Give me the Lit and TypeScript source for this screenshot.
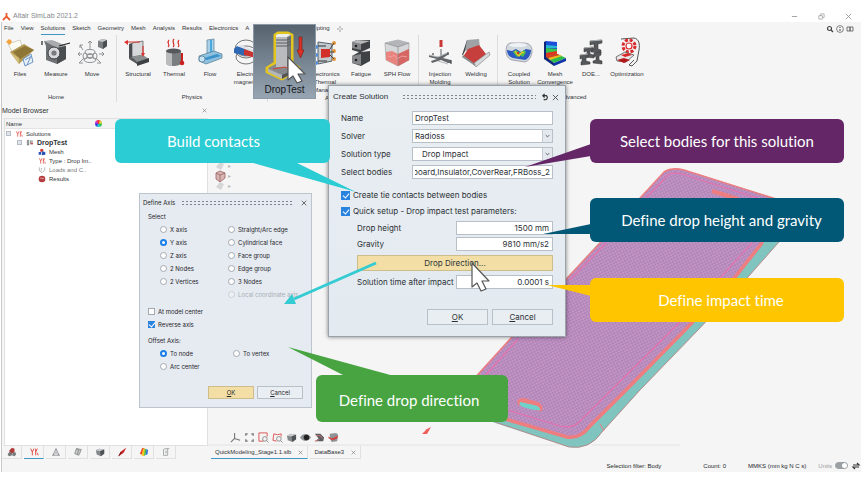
import { LitElement, html, svg, css, TemplateResult } from "lit";
import { customElement, query } from "lit/decorators.js";
import { classMap } from "lit/directives/class-map.js";

type Art = TemplateResult;

/* ---------- ribbon artwork, 30 x 30 ---------- */
const art: Record<string, Art> = {
  files: svg`<path d="M3 7l12-4 3 9-9 6z" fill="#fdfdf6" stroke="#b9b49a" stroke-width=".6"/><path d="M1 5l3-3 3 2-2 4z" fill="#f2a33c"/><path d="M5 15L19 7l10 6-15 14z" fill="#b39a55"/><path d="M8 15L20 9l9 4-14 9z" fill="#8d7636"/><path d="M5 15l9 6v6z" fill="#d3bc78"/><path d="M18 22l8-5 2 8-8 4z" fill="#e8f0f8" stroke="#4d7fb5" stroke-width=".8"/><path d="M20 23l5-3M22 28l4-9" stroke="#4d7fb5" stroke-width=".8"/>`,
  measure: svg`<path d="M3 4h10l12 5v13l-9 5-11-4V9z" fill="#6f7275"/><path d="M3 4l8-1 14 6-9 2z" fill="#a9acae"/><path d="M16 11l9-2v13l-9 5z" fill="#4b4e51"/><circle cx="13" cy="16" r="6" fill="#d7d9da" stroke="#3c3f42"/><circle cx="13" cy="16" r="2.600" fill="#77797b"/><path d="M18 9l11-3M1 4v4" stroke="#222" stroke-width="1.200"/>`,
  move: svg`<g fill="none" stroke="#85888b" stroke-width=".9"><path d="M13 12V4l-2 2m2-2l2 2M6 13L3 8m0 3V8h3M5 17H1l2-2m-2 2l2 2M22 17h5l-2-2m2 2l-2 2M7 21l-5 5h4M19 21l5 5h-4"/><ellipse cx="13" cy="15" rx="5" ry="2.500"/><ellipse cx="13" cy="23" rx="6" ry="2.500"/><circle cx="13" cy="19" r="2.500"/><ellipse cx="8" cy="19" rx="2" ry="3"/><ellipse cx="18" cy="19" rx="2" ry="3"/></g><path d="M21 4l4-2 5 1v6l-4 3-5-2z" fill="#7b7e80"/><path d="M21 4l5 1 4-2-5-1z" fill="#c3c5c6"/><path d="M26 5l4-2v6l-4 3z" fill="#4b4e50"/>`,
  structural: svg`<path d="M9 6l11-2v14l-11 2z" fill="#d6d8d9" stroke="#555" stroke-width=".7"/><path d="M6 7l3-1v14l-3 2z" fill="#4a4d50"/><path d="M9 20l11-2 6 4-12 5z" fill="#8b8e91"/><path d="M6 22l8 5v-2l-5-5z" fill="#565a5d"/><path d="M14 25l12-4v4l-12 4z" fill="#3d4043"/><path d="M5 5h12M20 9v8" stroke="#d33" stroke-width="1.200"/><path d="M1 5l4-2v5zM20 20l-2-4h4z" fill="#d33"/>`,
  thermal: svg`<path d="M7 14v12c0 4 15 4 15 0V14z" fill="#7b7e81"/><path d="M7 14v12c0 2 4 3 6 3V14z" fill="#b9bbbd"/><ellipse cx="14.500" cy="14" rx="7.500" ry="2.500" fill="#55585b"/><path d="M9 10c3-2-2-4 1-7M14 10c3-2-2-5 1-8M19 10c3-2-2-4 1-7" fill="none" stroke="#d8342c" stroke-width="1.200"/><path d="M22 16h2v8h-2z" fill="#c92020"/><circle cx="23" cy="26" r="2.300" fill="#c92020"/>`,
  flow: svg`<path d="M12 3l7-1v15l-7 2z" fill="#a9d2ea" stroke="#5c7f95" stroke-width=".7"/><path d="M15 3h2v16h-2z" fill="#4aa7dd"/><path d="M4 19l15-5 8 3v4l-16 6-7-3z" fill="#8fc2df" stroke="#4f7790" stroke-width=".7"/><path d="M6 22l16-5 4 2-14 4z" fill="#3c93cc"/><ellipse cx="7" cy="22" rx="3" ry="3" fill="#c7e4f3" stroke="#4f7790" stroke-width=".7"/>`,
  electro: svg`<g fill="none" stroke="#555" stroke-width=".8"><ellipse cx="15" cy="12" rx="11" ry="9"/><ellipse cx="15" cy="14" rx="9" ry="5"/><ellipse cx="15" cy="20" rx="10" ry="7"/></g><path d="M3 12l3-3 9 3v7L3 16z" fill="#2d68b5"/><path d="M13 12l11 3 1 6-12-3z" fill="#c93431"/><path d="M6 9l4-1 16 6-2 2z" fill="#dfe3e8"/>`,
  ethermal: svg`<path d="M8 5l14 2v17L8 27z" fill="#c2c9cf" stroke="#59636b"/><path d="M11 12l9 0v8l-9 1z" fill="#d22f28"/><path d="M8 9h8M8 24h9" stroke="#333"/><g fill="#e5973a"><circle cx="24" cy="6" r="2"/><circle cx="24" cy="14" r="2"/><circle cx="24" cy="22" r="2"/></g><g fill="#4b8ddb"><circle cx="6" cy="10" r="2"/><circle cx="6" cy="18" r="2"/><circle cx="6" cy="26" r="2"/></g><path d="M20 12l4-6M20 15h4M20 18l4 4" stroke="#444"/>`,
  fatigue: svg`<path d="M6 5l5-2h13v8l-9 4 9-1v10l-9 5-9-3v-7l7-4-7-2z" fill="#3f4244"/><path d="M6 5l9 2v6l-9-2zM6 19l9-2v11l-9-2z" fill="#85888a"/><path d="M6 5l5-2 13 1-9 3z" fill="#b7b9ba"/><circle cx="10" cy="9" r="1.300" fill="#222"/><circle cx="10" cy="23" r="1.300" fill="#222"/>`,
  sph: svg`<path d="M3 6l13-3 11 3v17l-11 6L4 23z" fill="#d5d7d8" stroke="#999" stroke-width=".6"/><path d="M3 6l13 4 11-4-11-3z" fill="#b3b6b8"/><path d="M4 15l6-1 6 3 11-5v11l-11 6L4 23z" fill="#e8837f"/><path d="M16 17l11-5v11l-11 6z" fill="#d66663"/><path d="M6 19l3 1 3-2 3 4 5-3 5 1" fill="none" stroke="#f0a09c"/><path d="M3 6l13 4v19M16 10l11-4" fill="none" stroke="#8d8f91" stroke-width=".7"/>`,
  injection: svg`<path d="M15 12h2v9h-2z" fill="#a8abad"/><path d="M14.500 3h3v7h-3z" fill="#c93835"/><path d="M4 18l9 2 9-4 2 1-6 4 8 2v3h-3l-7-3-9 3-1-2 6-2-8-2z" fill="#63676a"/><path d="M4 18l9 2 9-4M13 24l10 3" fill="none" stroke="#b5b8ba"/><path d="M8 16v2m15-3v3m3 5v4" stroke="#44484b" stroke-width="1.200"/>`,
  welding: svg`<path d="M1 18L6 3l3 1-7 14z" fill="#3f4347"/><path d="M6 3l12-1 1 9L4 14z" fill="#9fa3a6"/><path d="M7 12l11-4 7 9-12 10L2 20z" fill="#c63f3c"/><path d="M13 26l15-11 1 3-14 12z" fill="#d6d9db" stroke="#777" stroke-width=".6"/><path d="M2 18l12 9v2L1 20z" fill="#8a8e91"/>`,
  coupled: svg`<path d="M6 6h14c5 0 8 3 8 8s-3 10-7 11l-13-2c-4-1-6-5-6-9s1-7 4-8z" fill="#d0d7dd" stroke="#889" stroke-width=".7"/><path d="M3 13l5 1 4-2 5 3 5-3 5 1c0 5-3 9-6 10l-12-2c-4-1-6-4-6-8z" fill="#2a59c2"/><path d="M9 15l3-2 4 3 4-3 2 2-3 5-3-2-3 2z" fill="#4cc24e"/><path d="M11 14l2 3 2 2 3-4 2 1" fill="none" stroke="#f2c722" stroke-width="1.300"/><circle cx="14" cy="16" r="1.200" fill="#e13a20"/><ellipse cx="14" cy="8" rx="9" ry="2" fill="#eef2f5"/>`,
  mesh: svg`<path d="M6 4l11 1v12L6 19z" fill="#1d50d8"/><path d="M6 8l11 1v2L6 11z" fill="#28b8d6"/><path d="M6 11l11 1v3L6 16z" fill="#38c74a"/><path d="M6 16l11-2v3L6 21z" fill="#e0351f"/><path d="M6 20l11-3 9 4-12 5z" fill="#2dbd4a"/><path d="M6 20l11-3 3 1-12 4z" fill="#e0351f"/><path d="M8 21l12-3 2 1-12 4z" fill="#e6bf20"/><path d="M14 26l12-5v3l-12 5z" fill="#1233a8"/><path d="M4 5l2-1v16l8 6v3L4 22z" fill="#0e2675"/>`,
  doe: svg`<g fill="#55585b" stroke="#333" stroke-width=".5"><path d="M14 4l12-1v3l-4 1v5l3 1v3l-10-1v-3l3-1V7l-4 1z"/><path d="M8 11l9-1v3l-3 1v3l4 1v3l-10-1v-2l3-1v-3l-3 1z"/><path d="M4 18l8-1v3l-2 1v3l4 1v2l-9 1v-3l1-1v-3l-2 1z"/><path d="M18 16l7-1v3l-2 1v4l3 1v3l-9-1v-2l3-1v-4l-2 1z"/></g><path d="M14 4l12-1M8 11l9-1M4 18l8-1" stroke="#aeb1b3"/>`,
  optim: svg`<path d="M9 2l13-1c5 1 6 6 5 12l-2 11-5 5-3-1 5-5" fill="#f3f3f3" stroke="#555"/><circle cx="17" cy="9" r="6" fill="none" stroke="#d9292b" stroke-width="3" stroke-dasharray="3 1.700"/><circle cx="17" cy="9" r="3" fill="#fff" stroke="#d9292b" stroke-width="1.200"/><path d="M4 20l9-5 9 3-8 7-9-1z" fill="#e8e8e8" stroke="#555" stroke-width=".8"/><path d="M5 23l7-2 6 2-6 3z" fill="#b3191b"/><path d="M9 18l7-2 4 2-7 2z" fill="#d9292b"/>`,
};

/* ---------- drop test tile, 50 x 54 ---------- */
const dropArt = svg`<path d="M15 6l3-2h10l4 2v28l7 5-17 11L7 43v-4l8-5z" fill="#8c9094" stroke="#e3c51d" stroke-width="3" stroke-linejoin="round"/>
  <path d="M16 6l2-1h10l3 1-2 2H16z" fill="#eceded"/><path d="M16 8h11v30H16z" fill="#b9bbbd"/><path d="M27 8l4-2v31l-4 1z" fill="#74787b"/>
  <path d="M16 11h11l4-2M16 14h11l4-2M16 17h11l4-2" fill="none" stroke="#5a5e61"/>
  <path d="M8 39l8-4v3h11l4-1v-3l7 5-16 7z" fill="#85898c"/><path d="M8 40l14 6v4L8 43z" fill="#b4b7b9"/><path d="M22 46l16-7v2l-16 9z" fill="#505457"/>
  <path d="M13 40l12-2 4 2" fill="none" stroke="#d5443a"/>
  <path d="M39 8h3v13h2l-3.500 8-3.500-8h2z" fill="#d83227" stroke="#7c1712" stroke-width=".6"/>`;

/* ---------- small toolbar artwork, 12 x 12 ---------- */
const glyph: Record<string, Art> = {
  redcube: svg`<path d="M3 4l3-3 3 1v4L6 8 3 7z" fill="#b13a3a"/><path d="M1 8l2-2 3 1v3l-3 1-2-1zM7 7l3-1 1 3-2 2-3-1z" fill="#77797b"/>`,
  solve: svg`<path d="M2 2l2 4v4M4 6l2-4M8 2v4m2-4L8 6v4m2-3l1 3" fill="none" stroke="#e2504a" stroke-width="1.200"/>`,
  tri: svg`<path d="M6 2L2 10h8zM6 2v5M2 10l4-3 4 3" fill="none" stroke="#85888b" stroke-width=".9"/>`,
  sheet: svg`<path d="M4 2l6 1-3 7-5-2z" fill="#c4c6c8" stroke="#777" stroke-width=".8"/><path d="M4 2l3 1-2 6" fill="none" stroke="#777" stroke-width=".8"/>`,
  cube: svg`<path d="M1 4l4-2 6 1v5l-4 3-5-2z" fill="#86898b"/><path d="M1 4l5 1 5-2-6-1z" fill="#c9cbcc"/><path d="M6 5l5-2v5l-4 3z" fill="#505356"/>`,
  pen: svg`<path d="M11 1L8 7 2 11l2-5z" fill="#c8252a"/><path d="M2 11l3-5" stroke="#611"/>`,
  rainbow: svg`<path d="M4 1l3 1-2 8-4-2z" fill="#e8462f"/><path d="M5 2l3 0-2 9-3-1z" fill="#f4c820"/><path d="M7 2l2 1-1 6-2 2z" fill="#40bb4c"/><path d="M9 2l2 2-1 5-2 1z" fill="#3573d8"/>`,
  page: svg`<path d="M3 10V3l2-1h5M8 2v8H3M5 5h2M5 7h2" fill="none" stroke="#909395" stroke-width=".9"/>`,
  axes: svg`<path d="M5 7V1M5 7l6 2M5 7l-4 4" fill="none" stroke="#777" stroke-width="1.200"/>`,
  fit: svg`<path d="M2 4V2h2M8 2h2v2M2 8v2h2M8 10h2V8" fill="none" stroke="#777" stroke-width="1.500"/>`,
  zoombox: svg`<path d="M6 10H1V1h9v4" fill="none" stroke="#de4e4e"/><circle cx="7.500" cy="7.500" r="2.500" fill="none" stroke="#888"/><path d="M9.500 9.500l2 2" stroke="#888"/>`,
  zoomfree: svg`<path d="M5 10L1 9l1-7 4 1 4-1v3" fill="none" stroke="#de4e4e"/><circle cx="7.500" cy="7.500" r="2.500" fill="none" stroke="#888"/><path d="M9.500 9.500l2 2" stroke="#888"/>`,
  eye: svg`<path d="M0 6c3-5 9-5 12 0-3 5-9 5-12 0z" fill="#909395"/><circle cx="7" cy="6" r="3" fill="#222"/>`,
  eyes: svg`<path d="M1 2l6 0 4 4-1 4H1l4-3z" fill="#5b5e60"/><path d="M2 4l5 0 2 3M1 10l5-2" stroke="#c77" fill="none"/>`,
  redlayer: svg`<path d="M2 2l7-1 2 2-1 7-6 1-2-4z" fill="#909395"/><path d="M0 5l4 2 7-3-1 3-5 2-4-2z" fill="#d2403f"/>`,
  face: svg`<path d="M2 3l4-2 5 2v5l-5 4-4-3z" fill="#d8b6b3" stroke="#98625f" stroke-width=".8"/><path d="M2 3l4 2 5-2M6 5v6" fill="none" stroke="#98625f" stroke-width=".8"/>`,
  ghost: svg`<path d="M2 7l4-5 4 2-3 6z" fill="#d6d6d6"/>`,
  mesh3: svg`<path d="M4 1l4 1v3L5 6 3 5z" fill="#cc3a3a"/><path d="M1 6l4 0v4l-4 0zM6 5l5 1v4l-5 1z" fill="#2d55b5"/>`,
  droptest: svg`<path d="M2 2v7h2V2zM7 2v6M9 2v4" fill="none" stroke="#666" stroke-width="1.200"/><path d="M9 9l-2-3h4z" fill="#c44"/>`,
  loads: svg`<path d="M2 2v5l4 3 4-4V2M5 3v4" fill="none" stroke="#999"/>`,
  results: svg`<circle cx="6" cy="6" r="5" fill="#b53c40"/><path d="M3 5c2-2 4 2 6 0" stroke="#f1c9c9" fill="none"/>`,
};

const icon = (name: string) =>
  html`<svg class="glyph" viewBox="0 0 12 12" aria-hidden="true">${glyph[name]}</svg>`;

interface Tool { label: string; art: string; }
const ribbon: { name: string; tools: Tool[] }[] = [
  { name: "Home", tools: [
    { label: "Files", art: "files" }, { label: "Measure", art: "measure" }, { label: "Move", art: "move" } ] },
  { name: "Physics", tools: [
    { label: "Structural", art: "structural" }, { label: "Thermal", art: "thermal" },
    { label: "Flow", art: "flow" }, { label: "Electro\nmagnetic", art: "electro" } ] },
  { name: "A", tools: [
    { label: "", art: "" }, { label: "Electronics\nThermal\nManager", art: "ethermal" },
    { label: "Fatigue", art: "fatigue" }, { label: "SPH Flow", art: "sph" } ] },
  { name: "", tools: [
    { label: "Injection\nMolding", art: "injection" }, { label: "Welding", art: "welding" } ] },
  { name: "Advanced", tools: [
    { label: "Coupled\nSolution", art: "coupled" }, { label: "Mesh\nConvergence", art: "mesh" },
    { label: "DOE...", art: "doe" }, { label: "Optimization", art: "optim" } ] },
];

const menus = ["File", "View", "Solutions", "Sketch", "Geometry", "Mesh", "Analysis", "Results", "Electronics", "A", "Scripting"];
const tree = [
  { level: 0, icon: "solve", text: "Solutions", fold: true },
  { level: 1, icon: "droptest", text: "DropTest", fold: true, bold: true },
  { level: 2, icon: "mesh3", text: "Mesh" },
  { level: 2, icon: "solve", text: "Type : Drop Im.." },
  { level: 2, icon: "loads", text: "Loads and C..", dim: true },
  { level: 2, icon: "results", text: "Results" },
];
const browserTabs = ["redcube", "solve", "tri", "sheet", "cube", "pen", "rainbow", "page"];
const viewTools = ["axes", "fit", "zoombox", "zoomfree", "cube", "eye", "eyes", "redlayer"];

const base = css`
  * { box-sizing: border-box; }
  button, input, select { font: inherit; color: inherit; margin: 0; padding: 0; border-radius: 0; }
  button { cursor: pointer; }
  input[type="checkbox"], input[type="radio"] { appearance: none; flex: none; background: #fff; border: 1px solid #a3a9b0; display: grid; place-items: center; }
  input[type="radio"] { border-radius: 50%; width: 7px; height: 7px; }
  input[type="radio"]:checked { border: 2px solid #1a7fe8; }
  .tick:checked::after { content: ""; width: 3px; height: 5px; border: solid #fff; border-width: 0 1px 1px 0; transform: rotate(40deg); margin-top: -1px; }
  input[type="checkbox"].tick:checked { background: #2b83e0; border-color: #2b83e0; }
  .dots { flex: 1; height: 6px; background: radial-gradient(circle, #7d8690 0 0.8px, transparent 1px) 0 0 / 4px 3px; }
  .head { display: flex; align-items: center; }
  .plain { border: 0; background: none; display: grid; place-items: center; }
  .push { border: 1px solid #b9c0c8; background: #e9eef2; }
  .gold { background: #f3dfa6; border-color: #cdbd8b; }
`;

@customElement("define-axis-dialog")
export class DefineAxisDialog extends LitElement {
  static styles = [base, css`
    :host { display: block; box-sizing: border-box; padding: 4px 8px 8px 3px; background: #e5ebf1; border: 1px solid #bcc5ce; font: 6px/13px Inter, Arial, sans-serif; color: #1f2429; }
    .head { height: 9px; gap: 6px; line-height: 9px; margin-right: -4px; }
    .close { width: 7px; height: 7px; }
    .body { padding: 4px 0 0 5px; }
    .title { line-height: 12px; height: 12px; }
    .cols { display: grid; grid-template-columns: 68px 1fr; padding-left: 12px; }
    .wide { grid-template-columns: 73px 1fr; }
    label { display: flex; align-items: center; gap: 3px; height: 13px; white-space: nowrap; }
    .off { color: #a8aeb5; }
    .off input { border-color: #cbd0d6; background: #eef1f4; }
    input[type="checkbox"] { width: 7px; height: 7px; }
    .checks { padding: 4px 0; }
    .actions { display: flex; justify-content: flex-end; gap: 3px; padding-top: 13px; }
    .push { width: 46px; height: 13px; line-height: 11px; }
  `];

  private radio(group: string, text: string, on = false, off = false) {
    return html`<label class=${classMap({ off })}><input type="radio" name=${group} .checked=${on} ?disabled=${off} />${text}</label>`;
  }

  render() {
    return html`
      <div class="head"><span>Define Axis</span><span class="dots"></span>
        <button class="plain close" aria-label="Close"><svg viewBox="0 0 8 8" width="6" height="6"><path d="M1 1l6 6M7 1L1 7" stroke="#444" /></svg></button></div>
      <div class="body">
        <div class="title">Select</div>
        <div class="cols">
          <div>${this.radio("axis", "X axis")}${this.radio("axis", "Y axis", true)}${this.radio("axis", "Z axis")}${this.radio("axis", "2 Nodes")}${this.radio("axis", "2 Vertices")}</div>
          <div>${this.radio("axis", "Straight/Arc edge")}${this.radio("axis", "Cylindrical face")}${this.radio("axis", "Face group")}${this.radio("axis", "Edge group")}${this.radio("axis", "3 Nodes")}${this.radio("axis", "Local coordinate axis", false, true)}</div>
        </div>
        <div class="checks">
          <label><input class="tick" type="checkbox" />At model center</label>
          <label><input class="tick" type="checkbox" checked />Reverse axis</label>
        </div>
        <div class="title">Offset Axis:</div>
        <div class="cols wide">
          <div>${this.radio("offset", "To node", true)}${this.radio("offset", "Arc center")}</div>
          <div>${this.radio("offset", "To vertex")}</div>
        </div>
      </div>
      <div class="actions"><button class="push gold"><u>O</u>K</button><button class="push"><u>C</u>ancel</button></div>`;
  }
}

@customElement("create-solution-dialog")
export class CreateSolutionDialog extends LitElement {
  static styles = [base, css`
    :host { display: block; box-sizing: border-box; padding: 6px 12px 11px; background: linear-gradient(#e9eef2, #e3eaf0); border: 1px solid #9aa2aa; box-shadow: 0 0 4px #00000080; font: 8px/14px Inter, Arial, sans-serif; color: #2c3136; }
    .head { height: 10px; margin: 0 -7px 7px -8px; line-height: 10px; }
    .title { font-family: "Liberation Sans", Arial, sans-serif; }
    .dots { margin: 0 4px 0 14px; }
    .tool { width: 10px; height: 10px; }
    .row { display: grid; grid-template-columns: 71px 1fr; height: 18px; align-items: center; white-space: nowrap; }
    .value { grid-template-columns: 99px 1fr; height: 16px; }
    .nest { padding-left: 16px; }
    .field { width: 100%; height: 14px; background: #fff; border: 1px solid #b7bfc8; padding: 0 2px; line-height: 12px; }
    .right { text-align: right; padding-right: 3px; }
    .pick { display: grid; }
    .pick > * { grid-area: 1 / 1; }
    .pick select { appearance: none; outline: 0; }
    .pick .indent { padding-left: 9px; }
    .chev { justify-self: end; align-self: center; width: 10px; height: 12px; margin-right: 1px; border-left: 1px solid #c3cad1; background: #e3e9ee; pointer-events: none; }
    .checks { padding: 6px 0 1px; }
    .check { display: flex; align-items: center; gap: 3px; height: 16px; white-space: nowrap; }
    .check .tick { width: 9px; height: 9px; }
    .go { width: 100%; height: 16px; margin: 3px 0; display: block; }
    .actions { display: flex; justify-content: flex-end; gap: 4px; padding-top: 19px; }
    .push { line-height: 14px; }
    .actions .push { width: 61px; height: 16px; }
  `];

  @query("#bodies") private bodies!: HTMLInputElement;

  firstUpdated() {
    this.bodies.scrollLeft = this.bodies.scrollWidth;
  }

  private pick(id: string, value: string, indent = false) {
    return html`<span class="pick"><select id=${id} class=${classMap({ field: true, indent })}><option>${value}</option></select>
      <svg class="chev" viewBox="0 0 10 12"><path d="M3 5l2 2 2-2" fill="none" stroke="#555" /></svg></span>`;
  }

  render() {
    return html`
      <div class="head"><span class="title">Create Solution</span><span class="dots"></span>
        <button class="plain tool" aria-label="Reset"><svg viewBox="0 0 10 10" width="9" height="9"><path d="M2 3h4a2.500 2.500 0 1 1-3 4M4 1L2 3l2 2" fill="none" stroke="#333" stroke-width="1.300" /></svg></button>
        <button class="plain tool" aria-label="Close"><svg viewBox="0 0 8 8" width="7" height="7"><path d="M1 1l6 6M7 1L1 7" stroke="#444" /></svg></button></div>
      <div class="row"><label for="name">Name</label><input id="name" class="field" value="DropTest" /></div>
      <div class="row"><label for="solver">Solver</label>${this.pick("solver", "Radioss")}</div>
      <div class="row"><label for="type">Solution type</label>${this.pick("type", "Drop Impact", true)}</div>
      <div class="row"><label for="bodies">Select bodies</label><input id="bodies" class="field" value="board,Insulator,CoverRear,FRBoss_2" /></div>
      <div class="checks">
        <label class="check"><input class="tick" type="checkbox" checked />Create tie contacts between bodies</label>
        <label class="check"><input class="tick" type="checkbox" checked />Quick setup - Drop impact test parameters:</label>
      </div>
      <div class="nest">
        <div class="row value"><label for="height">Drop height</label><input id="height" class="field right" value="1500 mm" /></div>
        <div class="row value"><label for="gravity">Gravity</label><input id="gravity" class="field right" value="9810 mm/s2" /></div>
        <button class="push gold go">Drop Direction...</button>
        <div class="row value"><label for="time">Solution time after impact</label><input id="time" class="field right" value="0.0001 s" /></div>
      </div>
      <div class="actions"><button class="push"><u>O</u>K</button><button class="push"><u>C</u>ancel</button></div>`;
  }
}

@customElement("app-root")
export class AppRoot extends LitElement {
  static styles = [base, css`
    :host { display: block; position: relative; overflow: hidden; background: #fff; font: 6px/8px "Liberation Sans", Arial, sans-serif; color: #303438; }
    .glyph { width: 12px; height: 12px; flex: none; display: block; }
    .shell { min-height: 100vh; padding: 10px 3px 8px 1px; display: flex; flex-direction: column; }
    .titlebar { display: flex; align-items: center; height: 12px; padding: 0 7px 0 1px; font-size: 7px; color: #85898d; gap: 2px; }
    .grow { flex: 1; }
    .win { width: 11px; height: 11px; margin-left: 14px; }
    .frame { flex: 1; display: flex; flex-direction: column; background: #f5f5f5; border-left: 1px solid #c9c9c9; }
    .menus { display: flex; align-items: center; height: 13px; padding: 0 7px 0 2px; gap: 7px; }
    .menus button { border: 0; background: none; height: 13px; line-height: 12px; border-bottom: 1px solid transparent; }
    .menus .on { border-bottom-color: #3f97c4; }
    .menus .short { width: 54px; text-align: left; }
    .util { display: flex; gap: 2px; }
    .ribbon { display: flex; height: 68px; }
    .group { display: flex; flex-direction: column; padding: 2px 3px 0; border-right: 1px solid #dcdcdc; height: 67px; }
    .group:first-child { padding: 2px 6px 0 0; }
    .group:last-child { border: 0; }
    .tools { display: flex; flex: 1; }
    .tool { width: 36px; border: 0; background: none; display: flex; flex-direction: column; align-items: center; gap: 3px; line-height: 8px; white-space: pre; }
    .tool svg { width: 30px; height: 30px; flex: none; }
    .tool span { width: 50px; margin: 0 -7px; text-align: center; }
    .group h2 { margin: 0; font: inherit; text-align: center; height: 9px; line-height: 9px; }
    .group .lead { text-align: left; padding-left: 54px; }
    .work { flex: 1; display: grid; grid-template-columns: 206px 1fr; }
    .browser { display: flex; flex-direction: column; }
    .bar { display: flex; align-items: center; justify-content: space-between; height: 15px; font-size: 7px; padding-right: 1px; }
    .panel { flex: 1; margin-left: 2px; background: #fff; border: 1px solid #e0e0e0; }
    .cols { display: flex; align-items: center; height: 10px; background: #f3f3f3; padding: 0 1px; gap: 73px; border-bottom: 1px solid #e4e4e4; }
    .wheel { width: 7px; height: 7px; border-radius: 50%; background: conic-gradient(#e33, #ed3, #3b4, #2cd, #33d, #d3c, #e33); }
    .node { display: flex; align-items: center; height: 9px; gap: 3px; padding-left: 1px; }
    .node .glyph { width: 8px; height: 8px; }
    .l1 { padding-left: 12px; } .l2 { padding-left: 33px; }
    .bold { font-weight: bold; font-size: 7px; } .dim { color: #777b80; }
    .fold { width: 5px; height: 5px; border: 1px solid #b5bcc4; background: #dfe5ea; margin-right: 1px; }
    .tabs { display: flex; height: 13px; gap: 2px; }
    .view .tabs { padding-left: 3px; }
    .tab { display: flex; align-items: center; gap: 7px; padding: 0 4px; border: 1px solid #e0e0e0; border-top: 0; border-left: 0; background: none; height: 13px; }
    .browser .tab { width: 20px; justify-content: center; }
    .browser .tab .glyph { width: 10px; height: 10px; }
    .tab.on { border-bottom: 1px solid #3f97c4; }
    .view { display: flex; flex-direction: column; min-width: 0; }
    .canvas { flex: 1; display: flex; flex-direction: column; justify-content: space-between; padding: 58px 0 3px 6px; }
    .side div { display: flex; align-items: center; height: 10px; gap: 2px; color: #bbb; }
    .strip { display: flex; gap: 3px; padding-left: 16px; }
    .strip .glyph { width: 11px; height: 11px; }
    .status { display: flex; align-items: center; justify-content: flex-end; height: 13px; color: #24282c; }
    .status .a { margin-right: 42px; } .status .b { margin-right: 22px; } .status .c { margin-right: 12px; } .status .d { color: #999; margin-right: 3px; }
    .status .switch { border-radius: 4px; background: #9ba0a4; border: 1px solid #9ba0a4; width: 13px; height: 7px; justify-items: end; margin-right: 3px; }
    .switch:checked::after { content: ""; width: 5px; height: 5px; border-radius: 50%; background: #fff; }
    .over { position: absolute; }
    .scene { left: 0; top: 0; width: 864px; height: 480px; pointer-events: none; }
    .axis { left: 139px; top: 193px; width: 173px; }
    .create { left: 328px; top: 85px; width: 238px; }
    .tile { left: 253px; top: 24px; width: 63px; height: 75px; background: linear-gradient(#56636f, #97a5b3); border: 1px solid #8b98a6; display: flex; flex-direction: column; align-items: center; gap: 1px; padding-top: 4px; font-size: 10px; line-height: 12px; color: #16191c; }
    .tile svg { width: 50px; height: 54px; }
    .note { display: grid; place-items: center; height: 44px; border-radius: 6px; color: #fff; font: 15px/20px Lato, sans-serif; font-variant-ligatures: none; white-space: nowrap; }
    .cyan { left: 115px; top: 119px; width: 215px; background: #2bccd3; padding-right: 18px; }
    .purple { left: 590px; top: 119px; width: 254px; background: #642667; }
    .teal { left: 590px; top: 198px; width: 254px; background: #005776; padding-left: 9px; }
    .yellow { left: 590px; top: 278px; width: 254px; background: #ffc600; padding-left: 8px; }
    .green { left: 316px; top: 375px; width: 192px; height: 47px; background: #47a440; padding: 2px 6px 0 0; }
  `];

  private node(n: any) {
    return html`<div class=${classMap({ node: true, ["l" + n.level]: true, bold: !!n.bold, dim: !!n.dim })}>
      ${n.fold ? html`<span class="fold"></span>` : ""}${icon(n.icon)}<span>${n.text}</span></div>`;
  }

  render() {
    const cross = html`<svg viewBox="0 0 8 8" width="5" height="5"><path d="M1 1l6 6M7 1L1 7" stroke="#777" fill="none" /></svg>`;
    return html`
      <div class="shell">
        <header class="titlebar">
          <svg viewBox="0 0 10 10" width="9" height="9"><path d="M5 1v4L1 9M5 5l4 4" fill="none" stroke="#e8592b" stroke-width="2" /></svg>
          <span>Altair SimLab 2021.2</span><span class="grow"></span>
          <button class="plain win" aria-label="Minimize"><svg viewBox="0 0 8 8" width="7" height="7"><path d="M1 4h6" stroke="#999" /></svg></button>
          <button class="plain win" aria-label="Restore"><svg viewBox="0 0 8 8" width="7" height="7"><path d="M1 3h4v4H1zM3 3V1h4v4H5" fill="none" stroke="#999" stroke-width=".8" /></svg></button>
          <button class="plain win" aria-label="Close"><svg viewBox="0 0 8 8" width="7" height="7"><path d="M1 1l6 6M7 1L1 7" stroke="#999" /></svg></button>
        </header>
        <div class="frame">
          <nav class="menus">
            ${menus.map((m) => html`<button class=${classMap({ on: m === "Solutions", short: m === "A" })}>${m}</button>`)}
            <svg viewBox="0 0 8 8" width="6" height="6"><path d="M4 0v8M0 4h8" stroke="#bbb" stroke-width="2" stroke-dasharray="3 2" /></svg>
            <span class="grow"></span>
            <span class="util">
              <svg viewBox="0 0 8 8" width="8" height="8"><circle cx="3.500" cy="3.500" r="2" fill="none" stroke="#444" stroke-width="1.200" /><path d="M5 5l2 2" stroke="#444" stroke-width="1.400" /></svg>
              <svg viewBox="0 0 8 8" width="8" height="8"><circle cx="4" cy="4" r="3.400" fill="none" stroke="#666" stroke-width=".8" /><path d="M4 2v1m0 1v2" stroke="#444" /></svg>
              <svg viewBox="0 0 8 8" width="8" height="8"><path d="M1 2h3v4H1zM4 2h3v4H4z" fill="none" stroke="#555" stroke-width=".8" /></svg>
            </span>
          </nav>
          <div class="ribbon">
            ${ribbon.map((g) => html`<section class="group"><div class="tools">
              ${g.tools.map((t) => t.art
                ? html`<button class="tool"><svg viewBox="0 0 30 30">${art[t.art]}</svg><span>${t.label}</span></button>`
                : html`<span class="tool"></span>`)}
            </div><h2 class=${classMap({ lead: g.name === "A" })}>${g.name}</h2></section>`)}
          </div>
          <main class="work">
            <aside class="browser">
              <div class="bar"><span>Model Browser</span><button class="plain" aria-label="Close browser">${cross}</button></div>
              <div class="panel">
                <div class="cols"><span>Name</span><span class="wheel"></span></div>
                ${tree.map((n) => this.node(n))}
              </div>
              <div class="tabs">${browserTabs.map((t, i) => html`<button class=${classMap({ tab: true, on: i === 1 })} aria-label=${t}>${icon(t)}</button>`)}</div>
            </aside>
            <section class="view">
              <div class="canvas">
                <div class="side">${["ghost", "face", "ghost"].map((s) => html`<div>${icon(s)}<span>▸</span></div>`)}</div>
                <div class="strip">${viewTools.map((t) => icon(t))}</div>
              </div>
              <div class="tabs">
                <button class="tab on">QuickModeling_Stage1.1.slb ${cross}</button>
                <button class="tab">DataBase3 ${cross}</button>
              </div>
            </section>
          </main>
          <footer class="status">
            <span class="a">Selection filter: Body</span><span class="b">Count: 0</span><span class="c">MMKS (mm kg N C s)</span>
            <label class="d" for="units">Units</label><input id="units" class="switch" type="checkbox" checked />
            <svg viewBox="0 0 10 8" width="10" height="8"><path d="M2 3h6L6 1M8 5H2l2 2" fill="none" stroke="#333" stroke-width="1.200" /></svg>
          </footer>
        </div>
      </div>

      <svg class="over scene" viewBox="0 0 864 480" aria-hidden="true">
        <defs><pattern id="weave" width="4" height="4" patternUnits="userSpaceOnUse" patternTransform="rotate(18)">
          <rect width="4" height="4" fill="#c694c3" /><path d="M0 1h2M2 3h2" stroke="#9078ae" /><path d="M0 0l4 4" stroke="#b184bd" stroke-width=".5" /></pattern></defs>
        <path d="M664 172Q672 167 684 170L803 207Q820 213 808 227L778 243 748 277 698 330 640 390 602 432Q590 450 569 447L474 416Q455 405 470 383Z" fill="#7fc4be" />
        <path d="M808 212L778 243 748 277 698 330 640 390 602 432Q590 450 569 447L495 422" fill="none" stroke="#b48c8c" stroke-width="1" />
        <path d="M664 172Q672 167 684 170L795 205Q804 209 796 216L762 243 735 278 687 328 628 388 590 427Q581 439 567 437L474 409Q458 400 472 381L512 337 600 243 641 197Z" fill="url(#weave)" stroke="#ee7d80" stroke-width="1.500" />
        <path d="M762 243L735 277 687 328 628 388 589 427Q580 439 567 437L498 417" fill="none" stroke="#ee7d80" stroke-width="3.500" />
        <path d="M752 243L676 326 580 421Q573 429 560 426L508 410M646 198L668 175Q674 172 682 174L770 202M606 243L570 280M518 339L484 377" fill="none" stroke="#e572ae" stroke-width="1.200" />
        <path d="M600 424l4 7" stroke="#ee7d80" />
        <path d="M712 191l26 8" stroke="#ee7d80" stroke-width="4" />
        <path d="M518 405q-3-7 6-7l14 4q6 3 4 9l-3 0z" fill="#ee7d80" /><path d="M520 402l14 3q7 2 6 5-4 1-17-3-5-2-3-5z" fill="#6fd2ca" />
        <path d="M422 434l4-4-1 0 6-3-4 7z" fill="#ee5f5a" /><path d="M207 445H560M592 445H680" stroke="#e2e2e2" />
      </svg>

      <define-axis-dialog class="over axis"></define-axis-dialog>
      <create-solution-dialog class="over create"></create-solution-dialog>
      <button class="over tile"><svg viewBox="0 0 50 54">${dropArt}</svg>DropTest</button>

      <div class="over note cyan">Build contacts</div>
      <div class="over note purple">Select bodies for this solution</div>
      <div class="over note teal">Define drop height and gravity</div>
      <div class="over note yellow">Define impact time</div>
      <div class="over note green">Define drop direction</div>

      <svg class="over scene" viewBox="0 0 864 480" aria-hidden="true">
        <path d="M250 162H295L356 192Z" fill="#2bccd3" />
        <path d="M591 144V156L525 167Z" fill="#642667" />
        <path d="M591 224V234L543 234Z" fill="#005776" />
        <path d="M591 285V296L547 285Z" fill="#ffc600" />
        <path d="M345 376H394L288 347Z" fill="#47a440" />
        <path d="M376 263L294 299" stroke="#34cbd2" stroke-width="3" /><path d="M284 304l8-10 4 10z" fill="#34cbd2" />
        <g fill="#fff" stroke="#555" stroke-width="1.200" stroke-linejoin="round">
          <path d="M288 57v23l5-4 4 7 5-2-4-7h7z" /><path d="M472 263v24l5-4 4 8 5-2-4-8h7z" /></g>
      </svg>`;
  }
}
